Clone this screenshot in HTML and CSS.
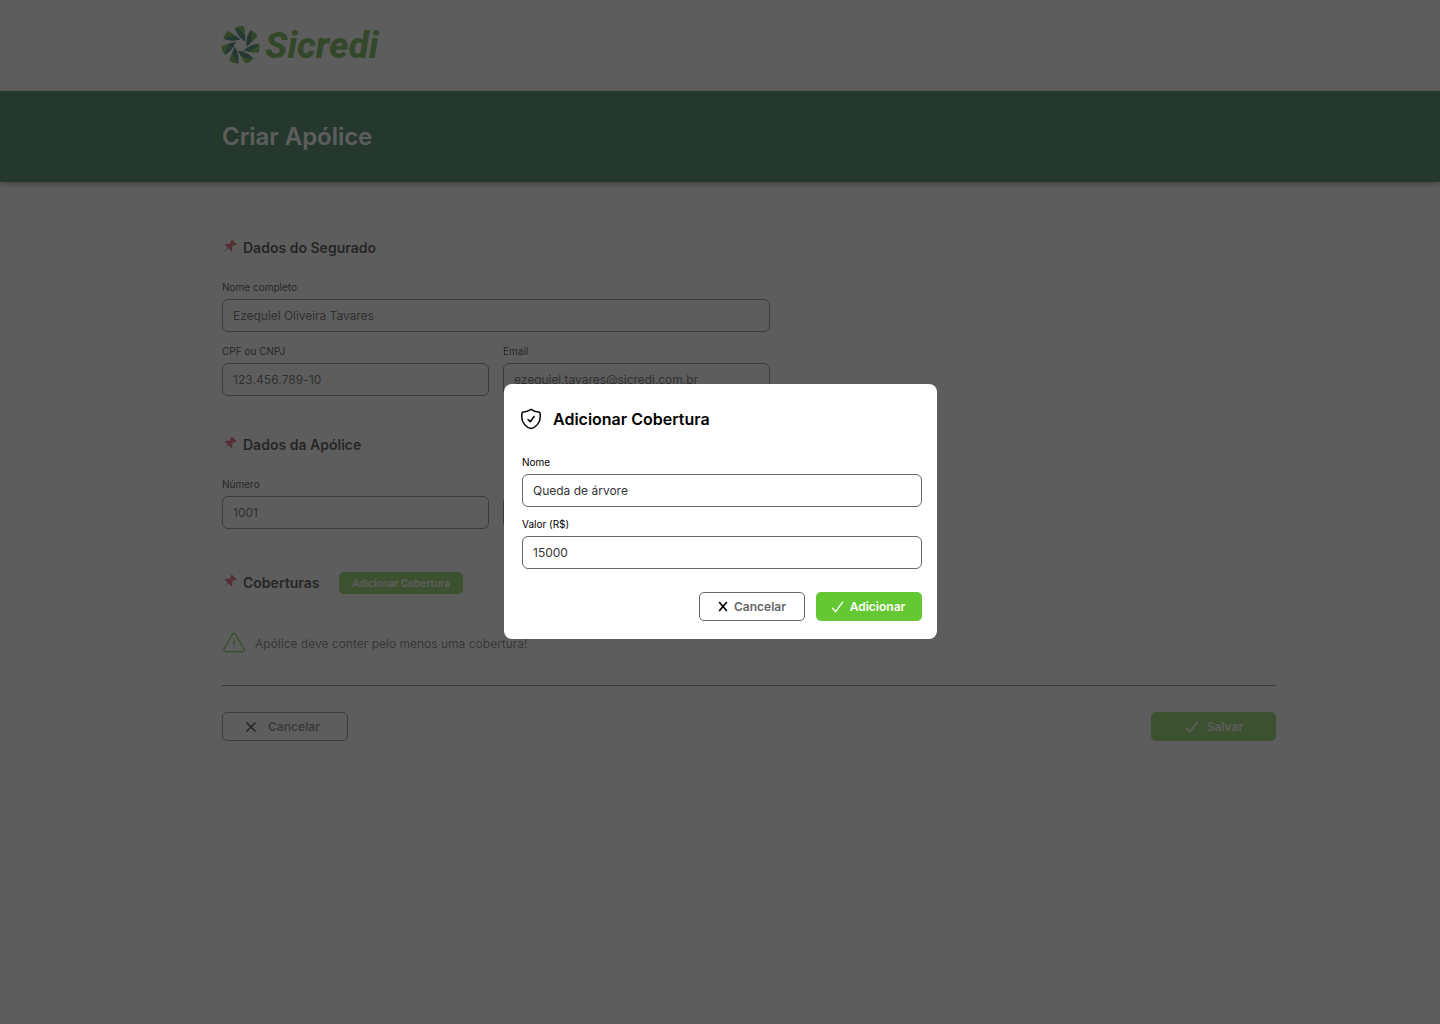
FILE: index.html
```html
<!DOCTYPE html>
<html lang="pt-BR">
<head>
<meta charset="utf-8">
<title>Criar Apólice</title>
<link rel="stylesheet" href="styles.css">
</head>
<body>
<svg width="0" height="0" class="defs" aria-hidden="true">
  <symbol id="pin" viewBox="0 0 16 16">
    <path d="M.4 15.400 6.300 7.600l2 1.800z" fill="#a9b4ba"/>
    <path d="M2.600 5.800c1.600-1 3.300-1 4.900-.5l2-2C9.200 2.200 9.500 1.200 10.400.4l5.300 5.200c-.8.9-1.900 1.200-3 .9l-2 2c.5 1.600.5 3.300-.5 4.900z" fill="#dd2e44"/>
  </symbol>
  <symbol id="check" viewBox="0 0 14 14">
    <path d="M1.500 8.200 5 12 12.500 1.800" fill="none" stroke="currentColor" stroke-width="1.500" stroke-linecap="round" stroke-linejoin="round"/>
  </symbol>
</svg>

<header class="brand">
  <svg class="logo" width="170" height="48" viewBox="0 0 170 48">
    <defs>
      <g id="blade">
        <path d="M-5.900-17.600Q-1-19.800 3.200-19Q4.600-15 4.500-9z" fill="#3fa110"/>
        <path d="M-5.700-17.500C-2-16 2.500-13 4.500-9.500L4.600-3.800C-.8-7-4.300-12-5.700-17.500z" fill="#005a3c"/>
      </g>
    </defs>
    <g transform="translate(18.600 21.300)">
      <use href="#blade"/>
      <use href="#blade" transform="rotate(51.430)"/>
      <use href="#blade" transform="rotate(102.860)"/>
      <use href="#blade" transform="rotate(154.290)"/>
      <use href="#blade" transform="rotate(205.710)"/>
      <use href="#blade" transform="rotate(257.140)"/>
      <use href="#blade" transform="rotate(308.570)"/>
    </g>
    <text class="logo-text" x="43" y="34.200" textLength="113.500" lengthAdjust="spacingAndGlyphs">Sicredi</text>
  </svg>
</header>

<div class="banner"><h1>Criar Apólice</h1></div>

<main class="page">
  <section class="insured">
    <h2><svg class="pin"><use href="#pin"/></svg>Dados do Segurado</h2>
    <div class="fields">
      <label class="wide">Nome completo<input value="Ezequiel Oliveira Tavares"></label>
      <label>CPF ou CNPJ<input class="document" value="123.456.789-10"></label>
      <label>Email<input value="ezequiel.tavares@sicredi.com.br"></label>
    </div>
  </section>

  <section class="policy">
    <h2><svg class="pin"><use href="#pin"/></svg>Dados da Apólice</h2>
    <div class="fields">
      <label>Número<input value="1001"></label>
      <label>Tipo<input></label>
    </div>
  </section>

  <section class="coverages">
    <h2><svg class="pin"><use href="#pin"/></svg>Coberturas <button class="add">Adicionar Cobertura</button></h2>
    <p class="notice">
      <svg width="24" height="24" viewBox="0 0 24 24" fill="none" stroke="#64c832" stroke-width="1.500" stroke-linecap="round" stroke-linejoin="round"><path d="M10.200 3.600 2.300 17.500a2.100 2.100 0 0 0 1.800 3.200h15.800a2.100 2.100 0 0 0 1.800-3.200L13.800 3.600a2.100 2.100 0 0 0-3.600 0z"/><path d="M12 9v4.500M12 16.500v.1"/></svg>
      Apólice deve conter pelo menos uma cobertura!
    </p>
  </section>

  <footer class="actions">
    <button class="btn outline cancel"><svg width="12" height="12" viewBox="0 0 12 12"><path d="M1.500 1.500l9 9M10.500 1.500l-9 9" stroke="#000" stroke-width="1.500"/></svg>Cancelar</button>
    <button class="btn solid save"><svg width="14" height="14"><use href="#check"/></svg>Salvar</button>
  </footer>
</main>

<div class="overlay">
  <div class="modal" role="dialog">
    <h3>
      <svg width="22" height="22" viewBox="0 0 22 22" fill="none" stroke="#000" stroke-width="1.500" stroke-linecap="round" stroke-linejoin="round"><path d="M11 1.300C8.600 3 5.200 4.100 2.400 4.200 1.900 5 1.700 6.500 1.700 8.500c0 6.500 4.800 11.100 9.300 12.100 4.500-1 9.300-5.600 9.300-12.100 0-2-.2-3.500-.7-4.300C16.800 4.100 13.400 3 11 1.300z"/><path d="m8 11.500 2.200 2.300 3.900-5.300"/></svg>
      Adicionar Cobertura
    </h3>
    <label>Nome<input value="Queda de árvore"></label>
    <label>Valor (R$)<input value="15000"></label>
    <div class="modal-actions">
      <button class="btn outline"><svg width="10" height="11" viewBox="0 0 10 11"><path d="M1.200 1l7.600 9M8.800 1l-7.600 9" stroke="#000" stroke-width="1.700"/></svg>Cancelar</button>
      <button class="btn solid confirm"><svg width="13" height="14"><use href="#check"/></svg>Adicionar</button>
    </div>
  </div>
</div>
</body>
</html>
```
FILE: styles.css
```css
* { box-sizing: border-box; }
body { margin: 0; height: 1024px; overflow: hidden; background: #fff; color: #000; font-family: Inter, sans-serif; }
h1, h2, h3, p { margin: 0; }
svg { display: block; flex: none; }
.defs { position: absolute; }

.brand { height: 91px; padding: 24px 0 0 222px; }
.logo { overflow: visible; }
.logo-text { font: italic 800 36px Roboto, sans-serif; fill: #3fa110; }
.banner { height: 91px; padding-left: 222px; display: flex; align-items: center; background: #00562a; box-shadow: 0 2px 5px rgba(0, 0, 0, .5); }
h1 { color: #fff; font-size: 24px; font-weight: 600; line-height: 30px; letter-spacing: -.05px; }

.page { width: 1054px; margin-left: 222px; padding-top: 53px; }
h2 { display: flex; align-items: center; height: 24px; font-size: 14px; font-weight: 600; letter-spacing: .01px; }
.pin { width: 15px; height: 15px; margin: 0 6px 1px 0; }
.fields { width: 548px; margin-top: 20px; display: grid; grid-template-columns: 267px 267px; gap: 11px 14px; }
.wide { grid-column: span 2; }
label { display: block; font-size: 10px; line-height: 14px; padding-top: 1px; }
input { display: block; width: 100%; height: 33px; margin-top: 5px; padding: 0 10px; border: 1px solid #666; border-radius: 6px; background: transparent; color: #333; font: 12px Inter, sans-serif; outline: none; }
.insured input { letter-spacing: -.04px; }
.insured .document { letter-spacing: .06px; }
.policy { margin-top: 36px; }
.coverages { margin-top: 41px; }
.add { width: 124px; height: 22px; margin: 2px 0 0 19.5px; padding: 0; border: 0; border-radius: 5px; background: #64c832; color: #fff; font: 600 10px Inter, sans-serif; }
.notice { height: 24px; margin-top: 37px; display: flex; align-items: center; gap: 9px; color: #555; font-size: 12px; }
.actions { margin-top: 30px; padding-top: 26px; border-top: 1px solid #666; display: flex; justify-content: space-between; }
.btn { display: flex; align-items: center; justify-content: center; height: 29px; width: 126px; padding: 0; gap: 10px; border-radius: 5px; font: 600 12px Inter, sans-serif; }
.outline { border: 1px solid #666; background: transparent; color: #666; }
.solid { border: 0; background: #64c832; color: #fff; gap: 8px; }
.cancel { padding-right: 5px; gap: 11px; }
.save { width: 125px; padding-left: 1px; }

.overlay { position: absolute; inset: 0; display: flex; justify-content: center; align-items: flex-start; padding: 384px 0 0 1px; background: rgba(48, 48, 48, .78); }
.modal { width: 433px; height: 255px; padding: 24px 15px 18px 18px; border-radius: 8px; background: #fff; }
h3 { display: flex; align-items: center; gap: 11px; height: 22px; margin: 0 0 24px -2px; font-size: 16px; font-weight: 600; }
.modal label + label { margin-top: 9px; }
.modal-actions { display: flex; justify-content: flex-end; gap: 11px; margin-top: 23px; }
.modal .btn { width: 106px; gap: 6px; }
.modal .confirm { padding-right: 2px; }
```
